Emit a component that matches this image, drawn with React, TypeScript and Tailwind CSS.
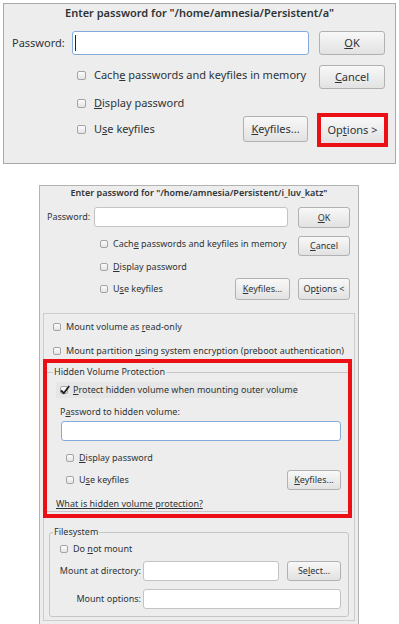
import type { ReactNode } from "react";

const U = ({ children }: { children: ReactNode }) => (
  <span className="underline decoration-1 underline-offset-[1px]">{children}</span>
);

const Btn = ({ className = "", children }: { className?: string; children: ReactNode }) => (
  <div
    className={`flex items-center justify-center rounded-[3px] border border-[#b1b1b1] bg-linear-to-b from-[#f8f8f8] to-[#e2e2e2] ${className}`}
  >
    {children}
  </div>
);

const Box = ({ small, checked }: { small?: boolean; checked?: boolean }) => (
  <div
    className={`relative shrink-0 rounded-[2px] border border-[#a4a4a4] bg-linear-to-b from-[#fcfcfc] to-[#e4e4e4] ${
      small ? "h-[8px] w-[8px]" : "h-[9px] w-[9px]"
    }`}
  >
    {checked && (
      <svg viewBox="0 0 10 10" className="absolute -top-[2px] -left-px h-[10px] w-[10px]">
        <path d="M1 5.5 L3.8 8.2 L9.2 1" fill="none" stroke="#1e1e1e" strokeWidth="1.8" />
      </svg>
    )}
  </div>
);

const Input = ({ className = "", focus }: { className?: string; focus?: boolean }) => (
  <div
    className={`rounded-[3px] border bg-white ${focus ? "border-[#84abd9]" : "border-[#c3c3c3]"} ${className}`}
  />
);

const TopDialog = () => (
  <div className="ml-[3px] mt-[3px] h-[161px] w-[393px] border border-[#a9a9a9] bg-[#ededed] text-[11px] text-[#2e3436]">
    <div className="h-[18px] text-center font-semibold leading-[18px]">
      Enter password for "/home/amnesia/Persistent/a"
    </div>
    <div className="mt-[9px] flex pl-[8px]">
      <div className="w-[297px]">
        <div className="flex h-[24px] items-center">
          <div className="w-[60px]">Password:</div>
          <div className="flex h-[24px] w-[237px] items-center rounded-[3px] border border-[#84abd9] bg-white">
            <div className="ml-[2px] h-[16px] w-px bg-[#222]" />
          </div>
        </div>
        <div className="mt-[10px] flex h-[20px] items-center gap-[8px] pl-[65px]">
          <Box />
          <span>
            Cach<U>e</U> passwords and keyfiles in memory
          </span>
        </div>
        <div className="mt-[8px] flex h-[20px] items-center gap-[8px] pl-[65px]">
          <Box />
          <span>
            <U>D</U>isplay password
          </span>
        </div>
        <div className="mt-[3px] flex h-[26px] items-center pl-[65px]">
          <Box />
          <span className="ml-[8px] flex-1">
            U<U>s</U>e keyfiles
          </span>
          <Btn className="mr-px h-[26px] w-[65px]">
            <span>
              <U>K</U>eyfiles...
            </span>
          </Btn>
        </div>
      </div>
      <div className="ml-[10px] w-[66px]">
        <Btn className="h-[24px]">
          <U>O</U>K
        </Btn>
        <Btn className="mt-[10px] h-[24px]">
          <span>
            <U>C</U>ancel
          </span>
        </Btn>
        <div className="mt-[24px] -ml-[2px] h-[34px] w-[71px] border-4 border-[#ec1016]">
          <div className="flex h-full items-center justify-center bg-linear-to-b from-[#f8f8f8] to-[#e2e2e2]">
            <span>
              Op<U>t</U>ions &gt;
            </span>
          </div>
        </div>
      </div>
    </div>
  </div>
);

const Row = ({ className = "", children }: { className?: string; children: ReactNode }) => (
  <div className={`flex items-center gap-[5px] whitespace-nowrap ${className}`}>{children}</div>
);

const BottomDialog = () => (
  <div className="ml-[39px] mt-[21px] h-[460px] w-[320px] border border-[#b3b3b3] bg-[#ededed] text-[9px] text-[#2e3436]">
    <div className="h-[13px] text-center font-semibold leading-[13px]">
      Enter password for "/home/amnesia/Persistent/i_luv_katz"
    </div>
    <div className="mt-[8px] flex pl-[7px]">
      <div className="w-[241px]">
        <div className="flex h-[21px]">
          <div className="flex h-[20px] w-[47px] items-center">Password:</div>
          <Input className="h-[20px] w-[194px]" />
        </div>
        <Row className="mt-[6px] h-[20px] pl-[53px]">
          <Box small />
          <span>
            Cach<U>e</U> passwords and keyfiles in memory
          </span>
        </Row>
        <Row className="mt-[3px] h-[20px] pl-[53px]">
          <Box small />
          <span>
            <U>D</U>isplay password
          </span>
        </Row>
        <Row className="-mr-[2px] mt-px h-[22px] pl-[53px]">
          <Box small />
          <span className="flex-1">
            U<U>s</U>e keyfiles
          </span>
          <Btn className="h-[22px] w-[55px]">
            <span>
              <U>K</U>eyfiles...
            </span>
          </Btn>
        </Row>
      </div>
      <div className="ml-[10px] w-[52px]">
        <Btn className="h-[21px]">
          <U>O</U>K
        </Btn>
        <Btn className="mt-[8px] h-[20px]">
          <span>
            <U>C</U>ancel
          </span>
        </Btn>
        <Btn className="mt-[22px] h-[22px]">
          <span>
            Op<U>t</U>ions &lt;
          </span>
        </Btn>
      </div>
    </div>

    <div className="ml-[3px] mt-[13px] w-[312px] border border-[#cdcdcd] pt-[5px] pb-[3px]">
      <Row className="h-[16px] pl-[9px]">
        <Box small />
        <span>
          Mount volume as <U>r</U>ead-only
        </span>
      </Row>
      <Row className="mt-[8px] h-[16px] pl-[9px]">
        <Box small />
        <span>
          Mount partition <U>u</U>sing system encryption (preboot authentication)
        </span>
      </Row>

      <div className="-ml-px w-[309px] border-4 border-[#ec1016] pt-[3px] pb-[2px]">
        <fieldset className="border-x-0 border-t border-b border-[#c9c9c9]">
          <legend className="ml-[6px] px-px leading-[12px]">Hidden Volume Protection</legend>
          <Row className="mt-[4px] ml-[9px] h-[16px] w-[240px] gap-[4px] bg-[#e6e6e6] pl-[4px]">
            <Box small checked />
            <span>
              <U>P</U>rotect hidden volume when mounting outer volume
            </span>
          </Row>
          <div className="mt-[7px] ml-[13px] h-[14px] leading-[14px]">
            P<U>a</U>ssword to hidden volume:
          </div>
          <Input focus className="mt-[2px] ml-[14px] h-[20px] w-[280px]" />
          <Row className="mt-[9px] ml-[19px] h-[16px]">
            <Box small />
            <span>
              <U>D</U>isplay password
            </span>
          </Row>
          <Row className="mt-[4px] ml-[19px] h-[20px] w-[275px]">
            <Box small />
            <span className="flex-1">
              U<U>s</U>e keyfiles
            </span>
            <Btn className="h-[20px] w-[54px]">
              <span>
                <U>K</U>eyfiles...
              </span>
            </Btn>
          </Row>
          <div className="mt-[7px] ml-[9px] h-[14px] leading-[14px]">
            <U>What is hidden volume protection?</U>
          </div>
        </fieldset>
      </div>

      <fieldset className="mt-[8px] ml-[5px] w-[300px] rounded-[3px] border border-[#c6c6c6] pb-[7px]">
        <legend className="ml-[3px] px-px leading-[12px]">Filesystem</legend>
        <Row className="mt-[3px] h-[16px] pl-[10px]">
          <Box small />
          <span>
            Do <U>n</U>ot mount
          </span>
        </Row>
        <div className="mt-[4px] flex h-[20px] items-center">
          <div className="w-[91px] text-right">Mount at directory:</div>
          <Input className="ml-[2px] h-[20px] w-[136px]" />
          <Btn className="ml-[8px] h-[20px] w-[54px]">
            <span>
              Se<U>l</U>ect...
            </span>
          </Btn>
        </div>
        <div className="mt-[8px] flex h-[20px] items-center">
          <div className="w-[91px] text-right">Mount options:</div>
          <Input className="ml-[2px] h-[20px] w-[198px]" />
        </div>
      </fieldset>
    </div>
  </div>
);

export default function App() {
  return (
    <div className="h-[624px] w-[399px] overflow-hidden bg-white font-['Noto_Sans',sans-serif]">
      <TopDialog />
      <BottomDialog />
    </div>
  );
}
